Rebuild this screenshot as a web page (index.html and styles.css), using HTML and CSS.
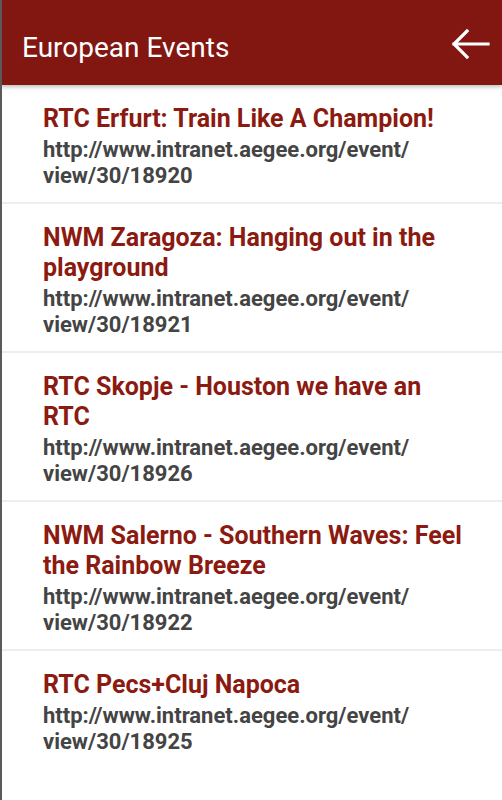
FILE: index.html
```html
<!DOCTYPE html>
<html lang="en">
<head>
    <meta charset="UTF-8">
    <meta name="viewport" content="width=device-width, initial-scale=1.0">
    <title>European Events</title>
    <link rel="stylesheet" href="styles.css">
</head>
<body>
    <header class="app-bar">
        <span class="app-title">European Events</span>
        <svg class="back-icon" width="40" height="32" viewBox="0 0 40 32">
            <path d="M38 16 H4 M17 3 L4 16 L17 29" fill="none" stroke="#fff" stroke-width="3.2" stroke-linecap="square" stroke-linejoin="miter"/>
        </svg>
    </header>
    <ul class="event-list">
        <li class="event">
            <div class="event-title">RTC Erfurt: Train Like A Champion!</div>
            <div class="event-link">http://www.intranet.aegee.org/event/<br>view/30/18920</div>
        </li>
        <li class="event">
            <div class="event-title">NWM Zaragoza: Hanging out in the playground</div>
            <div class="event-link">http://www.intranet.aegee.org/event/<br>view/30/18921</div>
        </li>
        <li class="event">
            <div class="event-title">RTC Skopje - Houston we have an RTC</div>
            <div class="event-link">http://www.intranet.aegee.org/event/<br>view/30/18926</div>
        </li>
        <li class="event">
            <div class="event-title">NWM Salerno - Southern Waves: Feel the Rainbow Breeze</div>
            <div class="event-link">http://www.intranet.aegee.org/event/<br>view/30/18922</div>
        </li>
        <li class="event">
            <div class="event-title">RTC Pecs+Cluj Napoca</div>
            <div class="event-link">http://www.intranet.aegee.org/event/<br>view/30/18925</div>
        </li>
    </ul>
</body>
</html>
```

FILE: styles.css
```css
body {
    margin: 0;
    font-family: Roboto, "Liberation Sans", sans-serif;
    background-color: #fff;
    min-height: 100vh;
    border-left: 2px solid #5a5a5a;
    box-sizing: border-box;
}

.app-bar {
    height: 85px;
    box-sizing: border-box;
    background-color: #821611;
    display: flex;
    align-items: center;
    justify-content: space-between;
    padding: 9px 12px 0 22px;
    margin-left: -2px;
    box-shadow: 0 2px 4px rgba(0, 0, 0, 0.25);
    position: relative;
}

.app-title {
    color: #fff;
    font-size: 28px;
}

.back-icon {
    margin-top: -6px;
}

.event-list {
    list-style: none;
    margin: 0;
    padding: 0;
}

.event {
    padding: 19px 34px 13px 41px;
    border-bottom: 2px solid #eeeeee;
}

.event:last-child {
    border-bottom: none;
}

.event-title {
    color: #8b1a10;
    font-size: 25px;
    font-weight: bold;
    line-height: 30px;
}

.event-link {
    color: #444;
    font-size: 22px;
    font-weight: bold;
    line-height: 26px;
    margin-top: 3px;
}
```
